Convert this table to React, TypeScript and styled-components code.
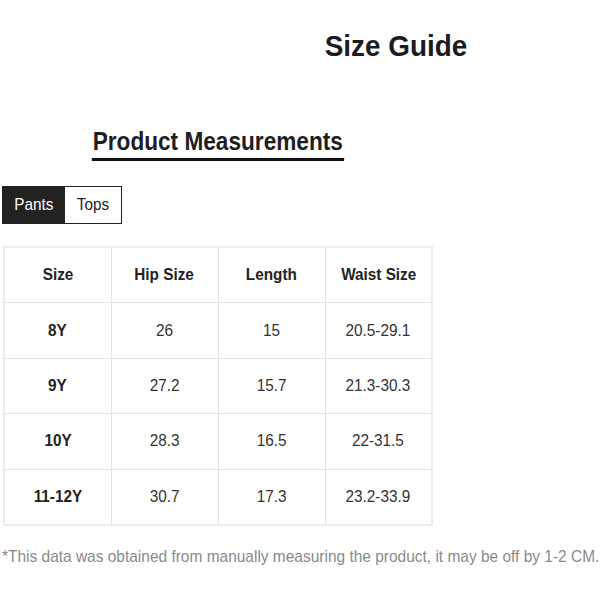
import React, { useState } from "react";
import styled, { createGlobalStyle } from "styled-components";

const GlobalStyle = createGlobalStyle`
  html, body { margin: 0; padding: 0; background: #ffffff; }
  body { font-family: "Liberation Sans", Arial, sans-serif; color: #222; }
`;

const Page = styled.div`
  width: 600px;
  height: 600px;
  display: flex;
  flex-direction: column;
  box-sizing: border-box;
  padding-top: 30px;
`;

const Title = styled.h1`
  margin: 0 0 0 192px;
  width: 408px;
  text-align: center;
  font-size: 30px;
  line-height: 32px;
  font-weight: 700;
  color: #1b1b22;
  transform: scaleX(0.93);
`;

const Section = styled.div`
  width: 430px;
  margin-left: 3px;
  margin-top: 64px;
  display: flex;
  justify-content: center;
`;

const SubTitle = styled.h2`
  margin: 0;
  font-size: 26px;
  line-height: 30px;
  font-weight: 700;
  color: #1e1e1e;
  padding: 0 1px 2px;
  border-bottom: 3px solid #111;
  transform: scaleX(0.87);
`;

const Tabs = styled.div`
  display: flex;
  margin-left: 2px;
  margin-top: 25px;
  border: 1px solid #222;
  width: max-content;
`;

const Tab = styled.button<{ $active: boolean }>`
  height: 36px;
  padding: 0;
  width: ${(p) => (p.$active ? "62px" : "56px")};
  border: none;
  background: ${(p) => (p.$active ? "#222222" : "#ffffff")};
  color: ${(p) => (p.$active ? "#ffffff" : "#222222")};
  font-family: "Liberation Sans", Arial, sans-serif;
  font-size: 17px;
  cursor: pointer;
`;

const Squeeze = styled.span`
  display: inline-block;
  transform: scaleX(0.9);
`;

const Table = styled.table`
  margin-left: 3px;
  margin-top: 22px;
  width: 430px;
  border-collapse: collapse;
  border: 2px solid #ececec;
  table-layout: fixed;
`;

const Cell = styled.td<{ $bold?: boolean }>`
  height: 54.4px;
  border: 1px solid #e4e4e4;
  text-align: center;
  vertical-align: middle;
  padding: 0;
  font-size: 17px;
  font-weight: ${(p) => (p.$bold ? 700 : 400)};
  color: ${(p) => (p.$bold ? "#222" : "#333")};
`;

const Note = styled.p`
  margin: 21px 0 0 2px;
  font-size: 17px;
  line-height: 20px;
  color: #8a8a8a;
  white-space: nowrap;
  transform-origin: left center;
  transform: scaleX(0.91);
`;

const headers = ["Size", "Hip Size", "Length", "Waist Size"];
const rows = [
  ["8Y", "26", "15", "20.5-29.1"],
  ["9Y", "27.2", "15.7", "21.3-30.3"],
  ["10Y", "28.3", "16.5", "22-31.5"],
  ["11-12Y", "30.7", "17.3", "23.2-33.9"],
];

export default function App() {
  const [tab, setTab] = useState("Pants");
  return (
    <Page>
      <GlobalStyle />
      <Title>Size Guide</Title>
      <Section>
        <SubTitle>Product Measurements</SubTitle>
      </Section>
      <Tabs>
        {["Pants", "Tops"].map((t) => (
          <Tab key={t} $active={tab === t} onClick={() => setTab(t)}>
            <Squeeze>{t}</Squeeze>
          </Tab>
        ))}
      </Tabs>
      <Table>
        <tbody>
          <tr>
            {headers.map((h) => (
              <Cell key={h} $bold>
                <Squeeze>{h}</Squeeze>
              </Cell>
            ))}
          </tr>
          {rows.map((r) => (
            <tr key={r[0]}>
              {r.map((v, i) => (
                <Cell key={i} $bold={i === 0}>
                  <Squeeze>{v}</Squeeze>
                </Cell>
              ))}
            </tr>
          ))}
        </tbody>
      </Table>
      <Note>
        *This data was obtained from manually measuring the product, it may be off by 1-2 CM.
      </Note>
    </Page>
  );
}
